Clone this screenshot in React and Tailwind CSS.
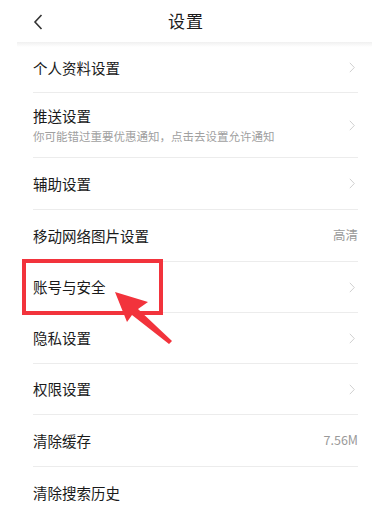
import React from 'react';

const rows = [
  { label: '个人资料设置', h: 'h-[50px]', arrow: true },
  { label: '推送设置', sub: '你可能错过重要优惠通知，点击去设置允许通知', h: 'h-[65px]', arrow: true },
  { label: '辅助设置', h: 'h-[52px]', arrow: true },
  { label: '移动网络图片设置', h: 'h-[52px]', value: '高清' },
  { label: '账号与安全', h: 'h-[51px]', arrow: true },
  { label: '隐私设置', h: 'h-[51px]', arrow: true },
  { label: '权限设置', h: 'h-[51px]', arrow: true },
  { label: '清除缓存', h: 'h-[52px]', value: '7.56M' },
  { label: '清除搜索历史', h: 'h-[52px]', last: true },
];

const Chevron = () => (
  <svg width="6" height="11" viewBox="0 0 6 11" fill="none">
    <path d="M0.8 0.8l4.5 4.7-4.5 4.7" stroke="#d0d0d0" strokeWidth="1" />
  </svg>
);

const App = () => {
  return (
    <div
      className="relative w-[372px] h-[516px] overflow-hidden bg-white"
      style={{ fontFamily: '"Noto Sans CJK SC", "Noto Sans", sans-serif' }}
    >
      {/* Header */}
      <div className="relative flex items-center justify-center h-[42px]">
        <svg className="absolute left-[33px] top-[14px]" width="10" height="16" viewBox="0 0 10 16" fill="none">
          <path d="M8.5 1L2 8l6.5 7" stroke="#333" strokeWidth="1.6" />
        </svg>
        <span className="text-[17px] text-[#1a1a1a] tracking-[1px]">设置</span>
      </div>
      <div className="ml-[17px] h-[5px] bg-gradient-to-b from-[#f0f0f0] to-white" />

      {/* List */}
      <div className="-mt-[4px] pl-[33px] pr-[14px]">
        {rows.map((r) => (
          <div
            key={r.label}
            className={`flex items-center justify-between ${r.h} ${r.last ? '' : 'border-b border-[#ececec]'}`}
          >
            <div className="flex flex-col">
              <span className="text-[14.5px] leading-[20px] text-[#1a1a1a]">{r.label}</span>
              {r.sub && (
                <span className="text-[11.5px] leading-[16px] text-[#a0a0a0] mt-[2px]">{r.sub}</span>
              )}
            </div>
            {r.arrow && (
              <span className="mr-[3px]">
                <Chevron />
              </span>
            )}
            {r.value && <span className="text-[12.5px] text-[#999]">{r.value}</span>}
          </div>
        ))}
      </div>

      {/* Red highlight */}
      <div className="absolute left-[22px] top-[259px] w-[141px] h-[56px] border-[4px] border-[#f2333c]" />
      <svg className="absolute left-0 top-0" width="372" height="516" viewBox="0 0 372 516">
        <polygon
          points="115,292 148,302 138,309 172,341 169,344 132,315 127,322"
          fill="#f2333c"
        />
      </svg>
    </div>
  );
};

export default App;
